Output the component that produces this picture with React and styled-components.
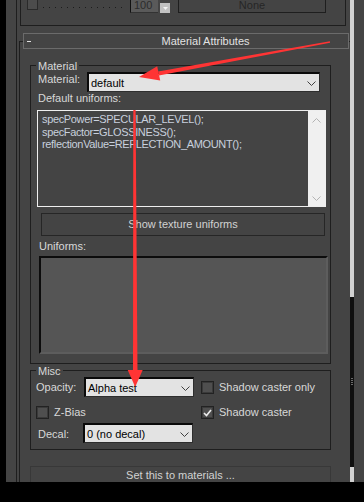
import React from "react";
import styled, { createGlobalStyle } from "styled-components";

const GlobalStyle = createGlobalStyle`
  html, body {
    margin: 0;
    padding: 0;
    background: #000;
  }
  body {
    font-family: "Liberation Sans", Arial, sans-serif;
  }
`;

const Screen = styled.div`
  position: relative;
  width: 364px;
  height: 502px;
  background: #000;
  overflow: hidden;
`;

const Window = styled.div`
  margin-left: 6px;
  width: 358px;
  height: 482px;
  background: #444;
  display: flex;
  overflow: hidden;
  font-size: 11px;
  color: #d8d8d8;
`;

const Content = styled.div`
  width: 344px;
  box-sizing: border-box;
  padding-left: 10px;
  display: flex;
`;

const Rail = styled.div`
  flex: 1;
  border-left: 1px solid #1e1e1e;
  display: flex;
  flex-direction: column;
`;

/* previous rollout, cut off at the top */
const TopRollout = styled.div`
  flex: none;
  margin-left: 3px;
  width: 326px;
  height: 26px;
  box-sizing: border-box;
  border: 1px solid #1e1e1e;
  border-top: none;
`;

const ControlsRow = styled.div`
  display: flex;
  align-items: flex-start;
  margin-top: -3px;
  padding-left: 6px;
  height: 16px;
`;

const TinyCheck = styled.div`
  width: 11px;
  height: 13px;
  box-sizing: border-box;
  background: #4c4c4c;
  border: 1px solid #2a2a2a;
`;

const Dots = styled.div`
  margin: 10px 0 0 5px;
  width: 80px;
  height: 1px;
  background: repeating-linear-gradient(to right, #1c1c1c 0 1px, transparent 1px 6px);
`;

const Spinner = styled.div`
  margin-left: 7px;
  width: 28px;
  height: 16px;
  box-sizing: border-box;
  background: #5a5a5a;
  border-left: 1px solid #111;
  border-bottom: 1px solid #333;
  color: #2c2c2c;
  padding: 2px 0 0 3px;
  line-height: 13px;
`;

const SpinButton = styled.div`
  margin: 6px 0 0 2px;
  width: 10px;
  height: 10px;
  background: #c2c2c2;
  display: flex;
  align-items: center;
  justify-content: center;
`;

const NoneButton = styled.div`
  margin-left: 8px;
  width: 148px;
  height: 16px;
  box-sizing: border-box;
  border: 1px solid #1e1e1e;
  color: #262626;
  text-align: center;
  padding-top: 1px;
  line-height: 13px;
`;

/* Material Attributes rollout */
const Frame = styled.div`
  flex: 1 0 auto;
  margin: 15px 0 0 2px;
  border-left: 1px solid #1e1e1e;
  border-top: 1px solid #1e1e1e;
  display: flex;
  flex-direction: column;
`;

const Header = styled.div`
  margin: -9px 0 0 3px;
  width: 326px;
  height: 16px;
  box-sizing: border-box;
  border: 1px solid #6b6b6b;
  background: #444;
  display: flex;
  align-items: center;
`;

const Minus = styled.div`
  margin-left: 3px;
  width: 4px;
  height: 1px;
  background: #e0e0e0;
`;

const Title = styled.div`
  flex: 1;
  text-align: center;
  padding-left: 32px;
  color: #e2e2e2;
  line-height: 13px;
`;

const GroupBox = styled.div`
  margin: ${({ $top }) => $top}px 0 0 10px;
  width: 301px;
  box-sizing: border-box;
  border: 1px solid #1e1e1e;
  padding-bottom: ${({ $bottom }) => $bottom}px;
`;

const Legend = styled.div`
  margin: -6px 0 0 5px;
  padding: 0 2px;
  width: fit-content;
  background: #444;
  line-height: 12px;
`;

const Row = styled.div`
  display: flex;
  align-items: flex-start;
  height: 20px;
  margin-left: ${({ $left }) => $left || 0}px;
`;

const Label = styled.span`
  display: block;
  width: ${({ $w }) => ($w ? `${$w}px` : "auto")};
  padding-top: ${({ $pt }) => $pt || 0}px;
  padding-left: ${({ $pl }) => $pl || 0}px;
  line-height: 13px;
  white-space: nowrap;
`;

const TextLine = styled.div`
  margin: ${({ $top }) => $top || 0}px 0 0 ${({ $left }) => $left}px;
  line-height: 13px;
`;

const Dropdown = styled.div`
  width: ${({ $w }) => $w}px;
  height: 20px;
  box-sizing: border-box;
  background: #e3e3e3;
  border-top: 2px solid #0a0a0a;
  border-left: 2px solid #0a0a0a;
  border-right: 1px solid #2e2e2e;
  border-bottom: 1px solid #2e2e2e;
  color: #000;
  display: flex;
  align-items: center;
  padding: 1px 3px 0 2px;
  svg {
    margin-left: auto;
  }
`;

const ScriptBox = styled.div`
  margin: 5px 0 0 6px;
  width: 289px;
  height: 97px;
  box-sizing: border-box;
  border: 1px solid #efefef;
  display: flex;
`;

const Code = styled.div`
  flex: 1;
  padding: 2px 0 0 4px;
  line-height: 12.5px;
  color: #c8d0dd;
  letter-spacing: -0.35px;
  white-space: pre;
`;

const InnerScroll = styled.div`
  width: 17px;
  background: #f0f0f0;
  display: flex;
  flex-direction: column;
  align-items: center;
  justify-content: space-between;
  padding: 7px 0 5px;
`;

const WideButton = styled.div`
  margin: 6px 0 0 10px;
  width: 284px;
  height: 23px;
  box-sizing: border-box;
  border: 1px solid #262626;
  text-align: center;
  line-height: 21px;
  color: #d2d2d2;
`;

const UniformsBox = styled.div`
  margin: 3px 0 0 8px;
  width: 289px;
  height: 98px;
  box-sizing: border-box;
  background: #555;
  border-top: 2px solid #0c0c0c;
  border-left: 2px solid #0c0c0c;
  border-right: 2px solid #5d5d5d;
  border-bottom: 2px solid #5d5d5d;
`;

const MiscGrid = styled.div`
  display: grid;
  grid-template-columns: 170px 1fr;
  grid-template-rows: 20px 26px 20px;
`;

const Cell = styled.div`
  display: flex;
  align-items: ${({ $align }) => $align || "flex-start"};
  align-self: ${({ $self }) => $self || "stretch"};
  margin-left: ${({ $left }) => $left || 0}px;
  margin-bottom: ${({ $mb }) => $mb || 0}px;
`;

const CheckBox = styled.div`
  width: 13px;
  height: 13px;
  box-sizing: border-box;
  background: #4f4f4f;
  border: 1px solid #222;
  box-shadow: inset 0 0 0 1px #3a3a3a;
  display: flex;
  align-items: center;
  justify-content: center;
  flex: none;
`;

const CheckLabel = styled.span`
  margin-left: 5px;
  line-height: 13px;
  white-space: nowrap;
`;

const SetButton = styled.div`
  margin: 16px 0 0 10px;
  width: 301px;
  height: 24px;
  box-sizing: border-box;
  border: 1px solid #383838;
  border-bottom: none;
  text-align: center;
  padding-top: 2px;
  line-height: 13px;
  color: #d2d2d2;
`;

const ScrollStrip = styled.div`
  width: 4px;
  display: flex;
  flex-direction: column;
`;

const ScrollTrack = styled.div`
  background: #d2d2d2;
  height: ${({ $h }) => ($h ? `${$h}px` : "auto")};
  flex: ${({ $h }) => ($h ? "none" : 1)};
`;

const ScrollThumb = styled.div`
  height: 170px;
  flex: none;
  background: #0f0f0f;
  display: flex;
  align-items: center;
  justify-content: center;
`;

const Grip = styled.div`
  width: 2px;
  height: 8px;
  background: repeating-linear-gradient(to bottom, #6a6a6a 0 1px, transparent 1px 2px);
`;

const Overlay = styled.svg`
  position: absolute;
  left: 0;
  top: 0;
  pointer-events: none;
`;

function Chevron({ up, color = "#404040" }) {
  return (
    <svg width="9" height="5" viewBox="0 0 9 5">
      <polyline
        points={up ? "0.5,4.5 4.5,0.5 8.5,4.5" : "0.5,0.5 4.5,4.5 8.5,0.5"}
        fill="none"
        stroke={color}
        strokeWidth="1"
      />
    </svg>
  );
}

function Select({ width, value }) {
  return (
    <Dropdown $w={width}>
      <span>{value}</span>
      <Chevron />
    </Dropdown>
  );
}

function Check({ checked }) {
  return (
    <CheckBox>
      {checked && (
        <svg width="9" height="8" viewBox="0 0 9 8">
          <polyline points="1,4 3.5,6.5 8,1" fill="none" stroke="#ececec" strokeWidth="1.6" />
        </svg>
      )}
    </CheckBox>
  );
}

export default function App() {
  return (
    <Screen>
      <GlobalStyle />
      <Window>
        <Content>
          <Rail>
            <TopRollout>
              <ControlsRow>
                <TinyCheck />
                <Dots />
                <Spinner>100</Spinner>
                <SpinButton>
                  <svg width="5" height="3" viewBox="0 0 5 3">
                    <polygon points="0,0 5,0 2.5,3" fill="#f4f4f4" />
                  </svg>
                </SpinButton>
                <NoneButton>None</NoneButton>
              </ControlsRow>
            </TopRollout>

            <Frame>
              <Header>
                <Minus />
                <Title>Material Attributes</Title>
              </Header>

              <GroupBox $top={16} $bottom={9}>
                <Legend>Material</Legend>
                <Row $left={7}>
                  <Label $w={49} $pt={1}>Material:</Label>
                  <Select width={233} value="default" />
                </Row>
                <TextLine $left={7}>Default uniforms:</TextLine>
                <ScriptBox>
                  <Code>
                    {"specPower=SPECULAR_LEVEL();\nspecFactor=GLOSSINESS();\nreflectionValue=REFLECTION_AMOUNT();"}
                  </Code>
                  <InnerScroll>
                    <Chevron up color="#b4b4b4" />
                    <Chevron color="#b4b4b4" />
                  </InnerScroll>
                </ScriptBox>
                <WideButton>Show texture uniforms</WideButton>
                <TextLine $top={4} $left={8}>Uniforms:</TextLine>
                <UniformsBox />
              </GroupBox>

              <GroupBox $top={6} $bottom={6}>
                <Legend>Misc</Legend>
                <MiscGrid>
                  <Cell>
                    <Label $w={48} $pt={4} $pl={5}>Opacity:</Label>
                    <Select width={110} value="Alpha test" />
                  </Cell>
                  <Cell $align="center">
                    <Check />
                    <CheckLabel>Shadow caster only</CheckLabel>
                  </Cell>
                  <Cell $align="center" $self="end" $left={5} $mb={4}>
                    <Check />
                    <CheckLabel>Z-Bias</CheckLabel>
                  </Cell>
                  <Cell $align="center" $self="end" $mb={4}>
                    <Check checked />
                    <CheckLabel>Shadow caster</CheckLabel>
                  </Cell>
                  <Cell>
                    <Label $w={45} $pt={5} $pl={7}>Decal:</Label>
                    <Select width={110} value="0 (no decal)" />
                  </Cell>
                </MiscGrid>
              </GroupBox>

              <SetButton>Set this to materials ...</SetButton>
            </Frame>
          </Rail>
        </Content>
        <ScrollStrip>
          <ScrollTrack $h={297} />
          <ScrollThumb>
            <Grip />
          </ScrollThumb>
          <ScrollTrack />
        </ScrollStrip>
      </Window>

      <Overlay width="364" height="502" viewBox="0 0 364 502">
        <polygon
          points="330.1,42.8 329.9,41.2 158.1,71.5 158.9,75.5"
          fill="#ff3434"
        />
        <polygon points="139,77 157.2,66.3 160.2,80.5" fill="#ff3434" />
        <polygon points="133.3,110 135.6,110 137.5,371 133,371" fill="#ff3434" />
        <polygon points="127.7,370 142.7,370 135.2,387" fill="#ff3434" />
      </Overlay>
    </Screen>
  );
}
